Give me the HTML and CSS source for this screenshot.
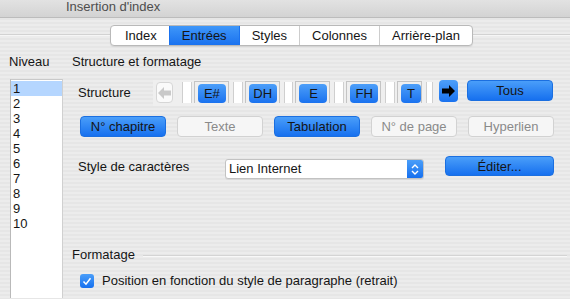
FILE: index.html
```html
<!DOCTYPE html>
<html lang="fr">
<head>
  <meta charset="UTF-8">
  <title>Insertion d'index</title>
  <link rel="stylesheet" href="styles.css">
</head>
<body>
  <div class="titlebar">Insertion d'index</div>

  <div class="tabbar">
    <div class="tabs">
      <div class="tab">Index</div>
      <div class="tab active">Entrées</div>
      <div class="tab">Styles</div>
      <div class="tab">Colonnes</div>
      <div class="tab">Arrière-plan</div>
    </div>
  </div>

  <div class="content">
    <div class="levels">
      <div class="levels-label">Niveau</div>
      <ul class="level-list">
        <li class="selected">1</li>
        <li>2</li>
        <li>3</li>
        <li>4</li>
        <li>5</li>
        <li>6</li>
        <li>7</li>
        <li>8</li>
        <li>9</li>
        <li>10</li>
      </ul>
    </div>

    <div class="main">
      <div class="heading">Structure et formatage</div>

      <div class="struct-row">
        <span class="row-label">Structure</span>
        <div class="struct">
          <span class="arrow disabled">
            <svg width="13" height="12" viewBox="0 0 13 12"><path d="M0 6 L6 0 L6 3.5 L13 3.5 L13 8.5 L6 8.5 L6 12 Z" fill="#c9c9c9"/></svg>
          </span>
          <span class="slot first"></span>
          <span class="frame"><span class="token">E#</span></span>
          <span class="slot"></span>
          <span class="frame"><span class="token">DH</span></span>
          <span class="slot"></span>
          <span class="frame"><span class="token">E</span></span>
          <span class="slot"></span>
          <span class="frame"><span class="token">FH</span></span>
          <span class="slot"></span>
          <span class="frame narrow"><span class="token">T</span></span>
          <span class="slot last"></span>
          <span class="arrow active">
            <svg width="13" height="12" viewBox="0 0 13 12"><path d="M13 6 L7 0 L7 3.5 L0 3.5 L0 8.5 L7 8.5 L7 12 Z" fill="#000"/></svg>
          </span>
        </div>
        <button class="btn blue tous">Tous</button>
      </div>

      <div class="btn-row">
        <button class="btn blue">N° chapitre</button>
        <button class="btn off">Texte</button>
        <button class="btn blue">Tabulation</button>
        <button class="btn off">N° de page</button>
        <button class="btn off">Hyperlien</button>
      </div>

      <div class="style-row">
        <span class="style-label">Style de caractères</span>
        <div class="select">
          <span class="select-value">Lien Internet</span>
          <span class="stepper">
            <svg width="8" height="13" viewBox="0 0 8 13"><path d="M1 5 L4 2 L7 5 M1 8 L4 11 L7 8" stroke="#fff" stroke-width="1.4" fill="none"/></svg>
          </span>
        </div>
        <button class="btn blue edit">Éditer...</button>
      </div>

      <div class="section">
        <span>Formatage</span>
        <span class="rule"></span>
      </div>

      <label class="check">
        <span class="box">
          <svg width="10" height="9" viewBox="0 0 10 9"><path d="M1.5 4.5 L4 7.2 L8.5 1.3" stroke="#fff" stroke-width="1.5" fill="none"/></svg>
        </span>
        Position en fonction du style de paragraphe (retrait)
      </label>
    </div>
  </div>
</body>
</html>
```

FILE: styles.css
```css
body {
  margin: 0; width: 570px; height: 299px; overflow: hidden;
  font: 13px "Liberation Sans", Arial, sans-serif; color: #151515;
  background: repeating-linear-gradient(180deg, #ececec 0 2px, #e6e6e6 2px 4px);
}

.titlebar {
  height: 17px; line-height: 14px; padding-left: 66px; color: #4d4d4d;
  background: linear-gradient(#e2e2e2, #d3d3d3);
  border-bottom: 1px solid #bcbcbc;
}

.tabbar { position: relative; margin-top: 7px; padding-left: 110px; height: 21px; }
.tabbar::before {
  content: ""; position: absolute; left: 0; right: 0; top: 9px;
  border-top: 1px solid #d2d2d2; border-bottom: 1px solid #f6f6f6;
}
.tabs {
  position: relative; display: inline-flex; background: #fff;
  border: 1px solid #b9b9b9; border-radius: 4px; overflow: hidden;
  box-shadow: 0 1px 1px rgba(0,0,0,0.08);
}
.tab { padding: 0 12px; line-height: 19px; border-left: 1px solid #cdcdcd; color: #151515; }
.tab:first-child { border-left: none; padding-left: 14px; }
.tab.active { background: linear-gradient(#3f97f9, #1a72ef); border-left-color: #1a72ef; }
.tab.active + .tab { border-left-color: #1a72ef; }

.content { display: flex; margin-top: 8px; }

.levels { width: 63px; flex: none; }
.levels-label { padding-left: 9px; line-height: 16px; }
.level-list {
  list-style: none; margin: 9px 0 0 10px; padding: 1px 0 0; height: 219px;
  box-sizing: border-box; overflow: hidden;
  background: #fff; border-left: 1px solid #b9b9b9; border-right: 1px solid #d0d0d0;
  border-top: 1px solid #c9c9c9;
}
.level-list li { line-height: 15px; padding-left: 2px; }
.level-list li.selected { background: #b5d6ff; }

.main { flex: 1; padding-left: 9px; }
.heading { line-height: 16px; }

.struct-row { display: flex; align-items: flex-start; margin-top: 10px; padding-left: 6px; }
.row-label { width: 75px; line-height: 26px; }

.struct {
  display: flex; align-items: flex-start; width: 305px; height: 26px;
  background: #efefef; box-sizing: border-box; padding: 2px 0 0 3px;
}
.arrow {
  width: 17px; height: 21px; border-radius: 4px; box-sizing: border-box;
  display: flex; align-items: center; justify-content: center;
}
.arrow.disabled { background: #fafafa; border: 1px solid #d6d6d6; }
.arrow.active { background: linear-gradient(#4d9ff9, #1a72ef); width: 19px; margin-left: 4px; margin-top: -2px; height: 22px; }
.slot {
  width: 10px; height: 21px; background: #fff; box-sizing: border-box; margin-right: 2px;
  border-left: 1px solid #cfcfcf; border-right: 1px solid #cfcfcf;
}
.slot.first { margin-left: 9px; }
.slot.last { width: 7px; }
.frame {
  width: 35px; height: 22px; box-sizing: border-box; margin-right: 4px; margin-top: -1px;
  border: 1px solid #c4c4c4; border-bottom: none; padding: 2px 0 0 3px;
}
.frame.narrow { width: 25px; }
.token {
  display: block; width: 28px; height: 19px; line-height: 19px; text-align: center;
  border-radius: 4px; background: linear-gradient(#4d9ff9, #1a72ef); color: #151515;
}
.frame.narrow .token { width: 20px; }

.btn {
  font: inherit; color: #151515; height: 21px; padding: 0; border-radius: 4px;
  box-sizing: border-box;
}
.btn.blue {
  background: linear-gradient(#4a9ef9, #1670ef); border: 1px solid #1b6fe0;
}
.btn.off { background: #f6f6f6; border: 1px solid #d2d2d2; color: #8a8a8a; }
.tous { width: 86px; margin-left: 9px; }

.btn-row { display: flex; gap: 11px; margin-top: 10px; padding-left: 8px; }
.btn-row .btn { width: 86px; }

.style-row { display: flex; align-items: flex-start; margin-top: 19px; padding-left: 6px; }
.style-label { width: 147px; line-height: 22px; }
.select {
  display: flex; width: 199px; height: 20px; margin-top: 3px; box-sizing: border-box;
  background: #fff; border: 1px solid #c2c2c2; border-radius: 3px; overflow: hidden;
  box-shadow: 0 1px 0 rgba(0,0,0,0.06);
}
.select-value { flex: 1; padding-left: 3px; line-height: 18px; }
.stepper {
  width: 16px; display: flex; align-items: center; justify-content: center;
  background: linear-gradient(#4a9ef9, #1670ef);
}
.edit { width: 109px; height: 20px; margin-left: 21px; }

.section { display: flex; align-items: center; margin-top: 68px; line-height: 16px; }
.rule { flex: 1; margin: 1px 3px 0 8px; border-top: 1px solid #d4d4d4; border-bottom: 1px solid #f8f8f8; }

.check { display: flex; align-items: center; margin-top: 10px; padding-left: 8px; line-height: 16px; }
.box {
  width: 14px; height: 14px; border-radius: 3px; margin-right: 8px;
  background: linear-gradient(#4a9ef9, #1670ef);
  display: flex; align-items: center; justify-content: center;
}
```
